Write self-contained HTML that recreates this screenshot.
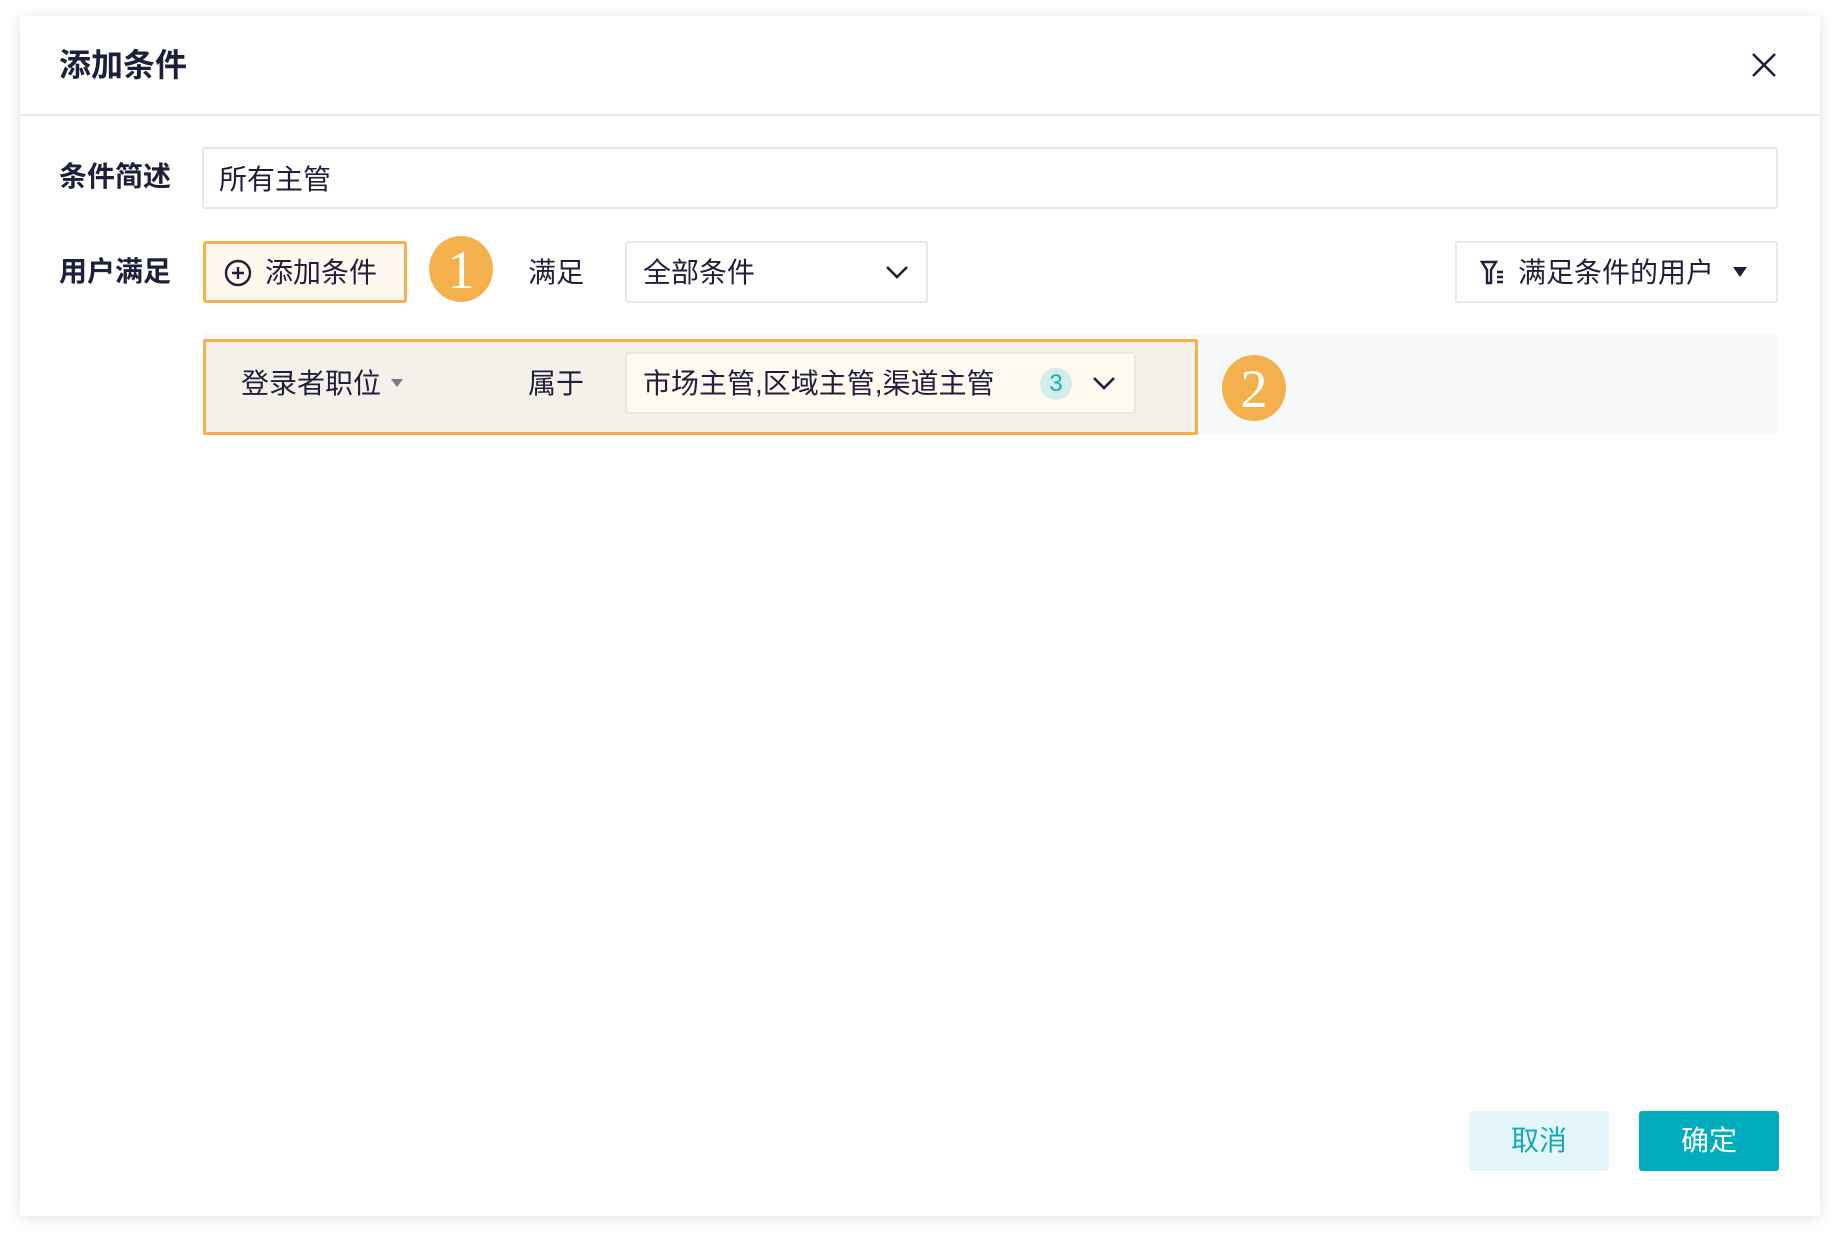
<!DOCTYPE html>
<html><head><meta charset="utf-8"><style>
*{box-sizing:border-box;margin:0;padding:0}
body{width:1840px;height:1240px;background:#fff;font-family:"Liberation Sans","Noto Sans CJK SC",sans-serif;color:#1d1f3b;position:relative;overflow:hidden}
.dlg{position:absolute;left:20px;top:16px;width:1800px;height:1200px;background:#fff;box-shadow:0 2px 14px rgba(0,0,0,.12)}
.a{position:absolute}
.t{font-size:28px;line-height:1;white-space:nowrap}
.b{font-weight:bold}
.circ{position:absolute;background:#f4b04d;border-radius:50%;color:#fff;font-family:"Liberation Serif",serif;text-align:center}
</style></head><body>
<div class="dlg">
 <div class="a t b" style="left:39px;top:33px;font-size:32px">添加条件</div>
 <svg class="a" style="left:1731px;top:36px" width="26" height="26" viewBox="0 0 26 26"><path d="M2 2L24 24M24 2L2 24" stroke="#1d1f3b" stroke-width="2.6"/></svg>
 <div class="a" style="left:0;top:98px;width:1800px;height:2px;background:#e6e6ec"></div>

 <div class="a t b" style="left:39px;top:147px">条件简述</div>
 <div class="a" style="left:182px;top:131px;width:1576px;height:62px;border:2px solid #e6e6ec;border-radius:3px"></div>
 <div class="a t" style="left:199px;top:150px">所有主管</div>

 <div class="a t b" style="left:39px;top:242px">用户满足</div>
 <div class="a" style="left:183px;top:225px;width:204px;height:62px;border:3px solid #f4b04d;background:#fff8ef;border-radius:3px"></div>
 <svg class="a" style="left:204px;top:243px" width="28" height="28" viewBox="0 0 28 28"><circle cx="14" cy="14" r="12" fill="none" stroke="#1d1f3b" stroke-width="2.4"/><path d="M14 8v12M8 14h12" stroke="#1d1f3b" stroke-width="2.4"/></svg>
 <div class="a t" style="left:245px;top:243px">添加条件</div>
 <div class="circ" style="left:409px;top:220px;width:64px;height:66px;font-size:54px;line-height:68px">1</div>
 <div class="a t" style="left:508px;top:243px">满足</div>
 <div class="a" style="left:605px;top:225px;width:303px;height:62px;border:2px solid #e6e6ec;border-radius:3px"></div>
 <div class="a t" style="left:623px;top:243px">全部条件</div>
 <svg class="a" style="left:865px;top:249px" width="24" height="14" viewBox="0 0 24 14"><path d="M2 2l10 10 10-10" fill="none" stroke="#1d1f3b" stroke-width="2.6"/></svg>
 <div class="a" style="left:1435px;top:225px;width:323px;height:62px;border:2px solid #e6e6ec;border-radius:3px"></div>
 <svg class="a" style="left:1460px;top:244px" width="28" height="26" viewBox="0 0 28 26"><path d="M2 2h14l-5 8v13h-4V10z" fill="none" stroke="#1d1f3b" stroke-width="2.4"/><path d="M17 12h6M17 17h6M17 22h6" stroke="#1d1f3b" stroke-width="2.4"/></svg>
 <div class="a t" style="left:1498px;top:243px">满足条件的用户</div>
 <svg class="a" style="left:1712px;top:250px" width="16" height="12" viewBox="0 0 16 12"><path d="M1 1h14L8 11z" fill="#1d1f3b"/></svg>

 <div class="a" style="left:183px;top:318px;width:1575px;height:100px;background:#f7f8fa"></div>
 <div class="a" style="left:183px;top:323px;width:995px;height:96px;border:3px solid #f4b04d;background:#f5f1ea;border-radius:2px"></div>
 <div class="a t" style="left:221px;top:354px">登录者职位</div>
 <svg class="a" style="left:370px;top:362px" width="14" height="10" viewBox="0 0 14 10"><path d="M1 1h12L7 9z" fill="#7a7a86"/></svg>
 <div class="a t" style="left:508px;top:354px">属于</div>
 <div class="a" style="left:605px;top:336px;width:511px;height:62px;border:2px solid #ebe6de;background:#fff9f0;border-radius:3px"></div>
 <div class="a t" style="left:623px;top:354px">市场主管,区域主管,渠道主管</div>
 <div class="a" style="left:1020px;top:352px;width:32px;height:32px;border-radius:50%;background:#d2ece8;color:#16aeb8;font-size:24px;line-height:32px;text-align:center">3</div>
 <svg class="a" style="left:1072px;top:360px" width="24" height="14" viewBox="0 0 24 14"><path d="M2 2l10 10 10-10" fill="none" stroke="#1d1f3b" stroke-width="2.6"/></svg>
 <div class="circ" style="left:1202px;top:339px;width:64px;height:66px;font-size:54px;line-height:68px">2</div>

 <div class="a" style="left:1449px;top:1095px;width:140px;height:60px;background:#e4f6f9;border-radius:3px;color:#12a9bd;font-size:28px;line-height:60px;text-align:center">取消</div>
 <div class="a" style="left:1619px;top:1095px;width:140px;height:60px;background:#02acbf;border-radius:3px;color:#fff;font-size:28px;line-height:60px;text-align:center">确定</div>
</div>
</body></html>
